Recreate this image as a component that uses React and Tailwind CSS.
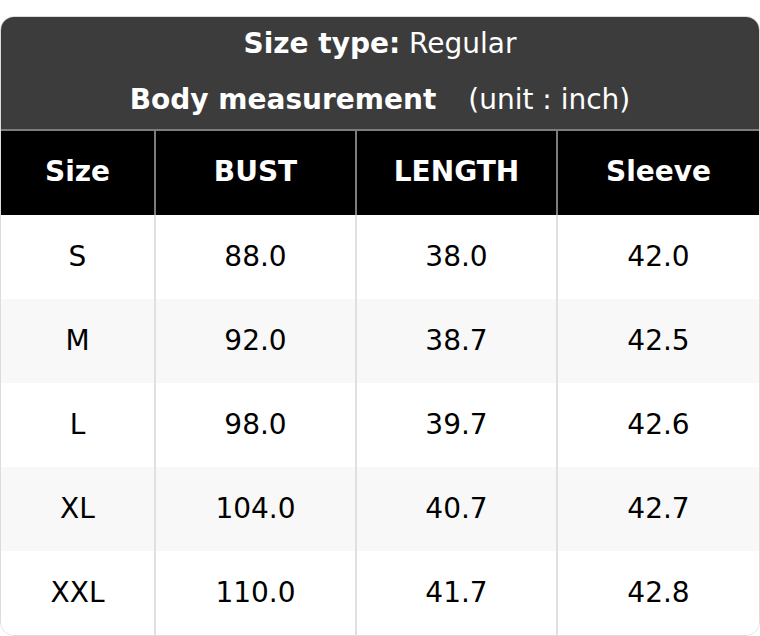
import React from 'react';

const rows = [
    ['S', '88.0', '38.0', '42.0'],
    ['M', '92.0', '38.7', '42.5'],
    ['L', '98.0', '39.7', '42.6'],
    ['XL', '104.0', '40.7', '42.7'],
    ['XXL', '110.0', '41.7', '42.8'],
];

const cols = 'grid grid-cols-[153px_201px_201px_1fr]';

const App = () => {
    return (
        <div className="pt-4 bg-white" style={{ fontFamily: '"DejaVu Sans", sans-serif' }}>
            <div className="rounded-[14px] border border-[#dcdcdc] overflow-hidden text-[28px]">
                <div className="bg-[#3c3c3c] text-white text-center border-b-2 border-[#7c7c7c]">
                    <div className="h-14 leading-[54px]">
                        <span className="font-bold">Size type:</span> Regular
                    </div>
                    <div className="h-14 leading-[54px]">
                        <span className="font-bold">Body measurement</span>
                        <span className="ml-8">(unit : inch)</span>
                    </div>
                </div>
                <div className={`${cols} bg-black text-white font-bold h-[84px]`}>
                    {['Size', 'BUST', 'LENGTH', 'Sleeve'].map((h, i) => (
                        <div key={h} className={`flex items-center justify-center pb-0.5 ${i > 0 ? 'border-l-2 border-[#7c7c7c]' : ''}`}>{h}</div>
                    ))}
                </div>
                {rows.map((r, ri) => (
                    <div key={r[0]} className={`${cols} h-[84px] text-black ${ri % 2 === 1 ? 'bg-[#f8f8f8]' : 'bg-white'}`}>
                        {r.map((c, i) => (
                            <div key={i} className={`flex items-center justify-center ${i > 0 ? 'border-l-2 border-[#e0e0e0]' : ''}`}>{c}</div>
                        ))}
                    </div>
                ))}
            </div>
        </div>
    );
};

export default App;
